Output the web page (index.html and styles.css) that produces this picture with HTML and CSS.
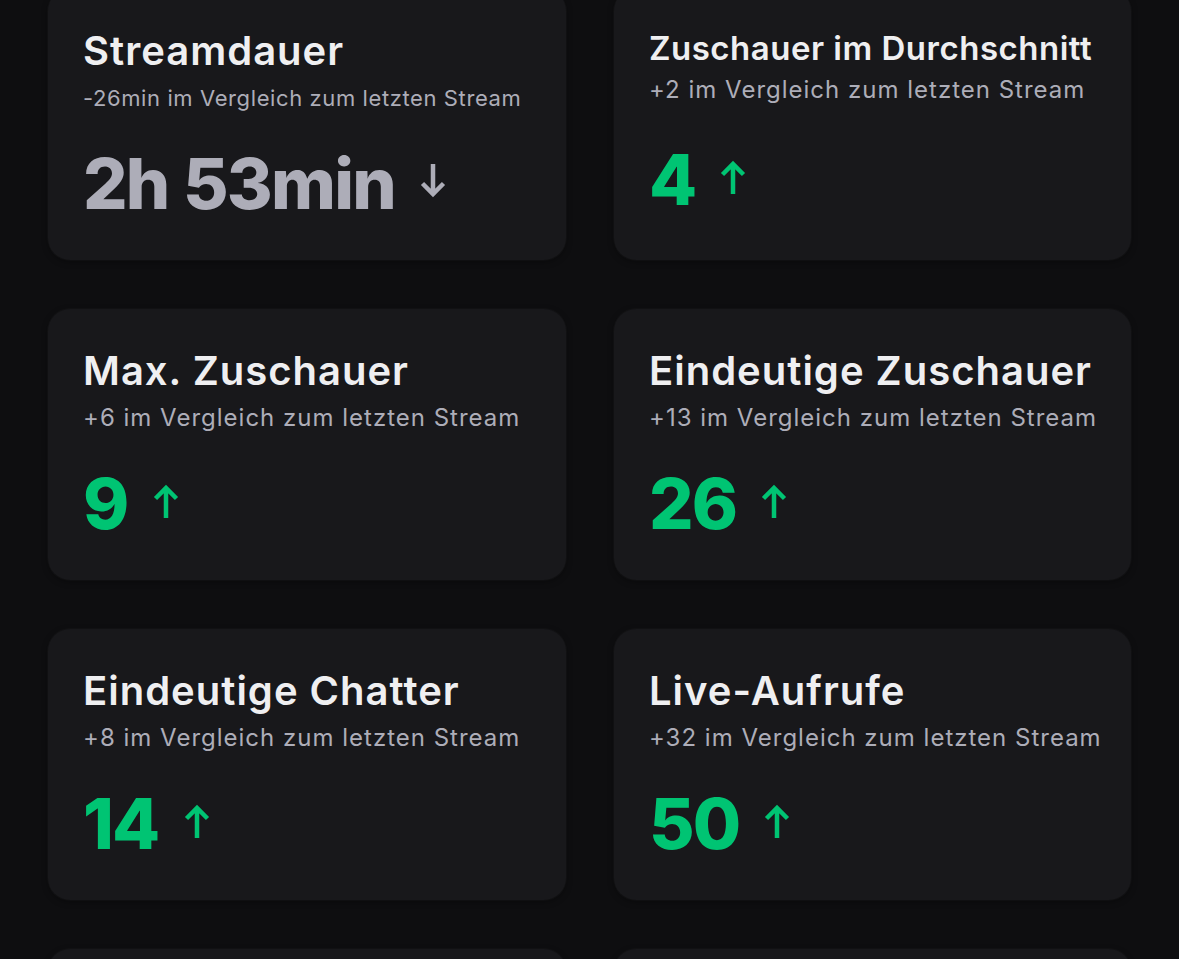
FILE: index.html
```html
<!DOCTYPE html>
<html lang="de">
<head>
<meta charset="utf-8">
<title>Stream-Statistiken</title>
<link rel="stylesheet" href="styles.css">
</head>
<body>
<main class="grid">
  <section class="card card-first">
    <h2 class="title">Streamdauer</h2>
    <p class="sub sub-small">-26min im Vergleich zum letzten Stream</p>
    <div class="value value-neutral">
      <span>2h 53min</span>
      <svg class="arrow" viewBox="0 0 28 34" aria-hidden="true"><path d="M14 0 V30 M3.5 19.5 L14 30 L24.5 19.5"/></svg>
    </div>
  </section>
  <section class="card card-compact">
    <h2 class="title title-small">Zuschauer im Durchschnitt</h2>
    <p class="sub">+2 im Vergleich zum letzten Stream</p>
    <div class="value value-up">
      <span>4</span>
      <svg class="arrow" viewBox="0 0 28 34" aria-hidden="true"><path d="M14 34 V4 M3.5 14.5 L14 4 L24.5 14.5"/></svg>
    </div>
  </section>
  <section class="card">
    <h2 class="title">Max. Zuschauer</h2>
    <p class="sub">+6 im Vergleich zum letzten Stream</p>
    <div class="value value-up">
      <span>9</span>
      <svg class="arrow" viewBox="0 0 28 34" aria-hidden="true"><path d="M14 34 V4 M3.5 14.5 L14 4 L24.5 14.5"/></svg>
    </div>
  </section>
  <section class="card">
    <h2 class="title">Eindeutige Zuschauer</h2>
    <p class="sub">+13 im Vergleich zum letzten Stream</p>
    <div class="value value-up">
      <span>26</span>
      <svg class="arrow" viewBox="0 0 28 34" aria-hidden="true"><path d="M14 34 V4 M3.5 14.5 L14 4 L24.5 14.5"/></svg>
    </div>
  </section>
  <section class="card">
    <h2 class="title">Eindeutige Chatter</h2>
    <p class="sub">+8 im Vergleich zum letzten Stream</p>
    <div class="value value-up">
      <span>14</span>
      <svg class="arrow" viewBox="0 0 28 34" aria-hidden="true"><path d="M14 34 V4 M3.5 14.5 L14 4 L24.5 14.5"/></svg>
    </div>
  </section>
  <section class="card">
    <h2 class="title">Live-Aufrufe</h2>
    <p class="sub">+32 im Vergleich zum letzten Stream</p>
    <div class="value value-up">
      <span>50</span>
      <svg class="arrow" viewBox="0 0 28 34" aria-hidden="true"><path d="M14 34 V4 M3.5 14.5 L14 4 L24.5 14.5"/></svg>
    </div>
  </section>
  <section class="card card-empty"></section>
  <section class="card card-empty"></section>
</main>
</body>
</html>
```

FILE: styles.css
```css
html, body {
  margin: 0;
  padding: 0;
  background: #0e0e10;
  height: 100%;
  overflow: hidden;
}

body {
  font-family: Inter, "Noto Sans", "Liberation Sans", sans-serif;
  color: #efeff1;
}

.grid {
  display: grid;
  grid-template-columns: 518px 517px;
  column-gap: 48px;
  row-gap: 49px;
  padding: 0 48px;
  margin-top: -11px;
}

.card {
  background: #18181b;
  border-radius: 22px;
  padding: 38px 35px 41px;
  box-shadow: 0 0 0 1px rgba(255, 255, 255, 0.025), 0 2px 6px rgba(0, 0, 0, 0.35);
  box-sizing: border-box;
  min-height: 271px;
}

.title {
  margin: 0;
  font-size: 40px;
  line-height: 48px;
  font-weight: 600;
  color: #efeff1;
  letter-spacing: 1px;
  white-space: nowrap;
}

.title-small {
  font-size: 33px;
  line-height: 42px;
  letter-spacing: 0.5px;
}

.sub {
  margin: 7px 0 0;
  font-size: 24px;
  line-height: 32px;
  font-weight: 400;
  color: #adadb8;
  letter-spacing: 1px;
  white-space: nowrap;
}

.card-compact .sub {
  margin-top: 5px;
}

.sub-small {
  font-size: 22px;
  letter-spacing: 0.6px;
}

.value {
  margin-top: 35px;
  display: flex;
  align-items: center;
  gap: 24px;
  font-size: 70px;
  line-height: 70px;
  font-weight: 800;
  letter-spacing: -1.8px;
  word-spacing: 1px;
}

.card-compact .value {
  margin-top: 39px;
}

.value-neutral {
  color: #adadb8;
}

.value-up {
  color: #00c473;
}

.arrow {
  width: 28px;
  height: 34px;
  flex: none;
  margin-top: -6px;
  fill: none;
  stroke: currentColor;
  stroke-width: 4.5;
  stroke-linejoin: miter;
  stroke-linecap: butt;
}
```
